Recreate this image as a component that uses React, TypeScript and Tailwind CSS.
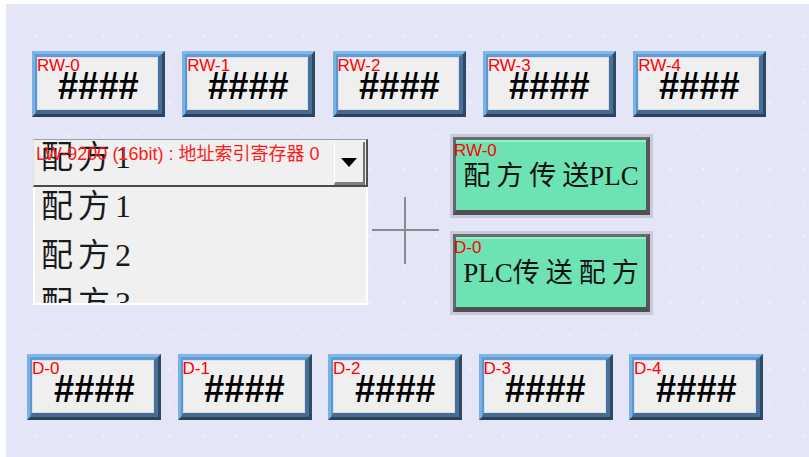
import React from 'react';

const sans = { fontFamily: '"Liberation Sans", "Noto Sans CJK SC", sans-serif' };
const serif = { fontFamily: '"Liberation Serif", "Noto Sans CJK SC", serif' };

const topTags = ['RW-0', 'RW-1', 'RW-2', 'RW-3', 'RW-4'];
const bottomTags = ['D-0', 'D-1', 'D-2', 'D-3', 'D-4'];
const recipes = ['配方1', '配方2', '配方3'];

// Raised blue numeric display cell
const NumberCell: React.FC<{ tag: string; wide?: boolean }> = ({ tag, wide }) => (
  <div
    className={`${wide ? 'w-[134px]' : 'w-[133px]'} h-[66px] border-[3px] border-t-[#80b8ea] border-l-[#78b1e5] border-r-[#2e4964] border-b-[#2a425b]`}
  >
    <div className="w-full h-full border-t-[3px] border-l-[2px] border-r-[4px] border-b-[4px] border-t-[#639bd1] border-l-[#5d96cc] border-r-[#4b7097] border-b-[#476a8d]">
      <div className="relative w-full h-full bg-[#efefef] border border-[#d4e2f0] flex items-center justify-center">
        <span className="absolute left-[-1px] top-[-1px] text-[17px] leading-none text-[#ff0000]" style={sans}>
          {tag}
        </span>
        <span className="text-[39px] leading-none font-bold text-black scale-x-[0.93] mt-[4px] ml-[2px]" style={sans}>
          ####
        </span>
      </div>
    </div>
  </div>
);

const Cjk: React.FC<{ children: React.ReactNode }> = ({ children }) => (
  <span className="tracking-[6px]">{children}</span>
);

// Green momentary push button
const GreenButton: React.FC<{ tag: string; label: React.ReactNode }> = ({ tag, label }) => (
  <div className="w-[203px] h-[84px] border-[3px] border-[#c9c9dc]">
    <div className="w-full h-full border-t-[3px] border-l-[3px] border-r-[4px] border-b-[5px] border-t-[#6a6a72] border-l-[#66666e] border-r-[#55555d] border-b-[#4f4f57]">
      <div className="relative w-full h-full bg-[#6de3b4] border-t-2 border-t-[#8ff0c9] flex items-center justify-center">
        <span className="absolute left-[-2px] top-[0px] text-[17px] leading-none text-[#ff0000]" style={sans}>
          {tag}
        </span>
        <span className="text-[27px] leading-none text-[#111] whitespace-nowrap mt-[1px]" style={serif}>
          {label}
        </span>
      </div>
    </div>
  </div>
);

const RecipeText: React.FC<{ text: string }> = ({ text }) => (
  <span className="text-[32px] leading-none text-[#1a1a1a] tracking-[5px]" style={serif}>
    {text}
  </span>
);

export default function App() {
  return (
    <div className="w-[809px] h-[457px] bg-white pl-[6px] pt-[4px] overflow-hidden">
      <div className="w-[803px] h-[453px] bg-[#e5e5f8] bg-[radial-gradient(circle,#f3f3ff_1px,transparent_1.5px)] bg-[size:33.33px_33.33px] bg-[position:14px_15px] flex flex-col">
        {/* recipe words RW-0..4 */}
        <div className="flex gap-[17.3px] mt-[47px] ml-[26px]">
          {topTags.map((t) => (
            <NumberCell key={t} tag={t} />
          ))}
        </div>

        <div className="flex items-start mt-[17px] ml-[27px]">
          {/* recipe selector */}
          <div className="mt-[5px] w-[335px]">
            <div className="relative h-[48px] bg-[#f0f0f0] border-t border-t-[#a0a0a0] border-l border-l-[#e0e0e0] border-r-2 border-r-[#505050] border-b-2 border-b-[#4a4a4a] pl-[7px] pt-[1px] overflow-hidden">
              <RecipeText text="配方1" />
              <span className="absolute left-[2px] top-[5px] text-[18px] leading-none text-[#ff1a1a] whitespace-nowrap" style={sans}>
                LW-9200 (16bit) : 地址索引寄存器 0
              </span>
              <div className="absolute right-[1px] top-[2px] w-[31px] h-[43px] bg-[#f0f0f0] border-l border-l-white border-r-2 border-r-[#707070] border-b-[3px] border-b-[#808080] flex items-center justify-center">
                <svg width="16" height="9" viewBox="0 0 16 9">
                  <path d="M0 0H16L8 9Z" fill="#000" />
                </svg>
              </div>
            </div>
            <div className="h-[118px] bg-[#f0f0f0] border-2 border-t-0 border-white pl-[6px] overflow-hidden flex flex-col">
              {recipes.map((r) => (
                <div key={r} className="h-[48.5px] shrink-0 pt-[3px]">
                  <RecipeText text={r} />
                </div>
              ))}
            </div>
          </div>

          {/* placement crosshair */}
          <div className="relative ml-[4px] mt-[63px] w-[67px] h-[67px]">
            <div className="absolute left-[32px] top-0 w-[2px] h-full bg-[#8a8a8a]" />
            <div className="absolute top-[32px] left-0 h-[2px] w-full bg-[#8a8a8a]" />
          </div>

          <div className="ml-[11px] flex flex-col gap-[13px]">
            <GreenButton
              tag="RW-0"
              label={
                <>
                  <Cjk>配方传</Cjk>送PLC
                </>
              }
            />
            <GreenButton
              tag="D-0"
              label={
                <>
                  PLC<Cjk>传送配</Cjk>方
                </>
              }
            />
          </div>
        </div>

        {/* data words D-0..4 */}
        <div className="flex gap-[16.5px] mt-[39px] ml-[21px]">
          {bottomTags.map((t) => (
            <NumberCell key={t} tag={t} wide />
          ))}
        </div>
      </div>
    </div>
  );
}
